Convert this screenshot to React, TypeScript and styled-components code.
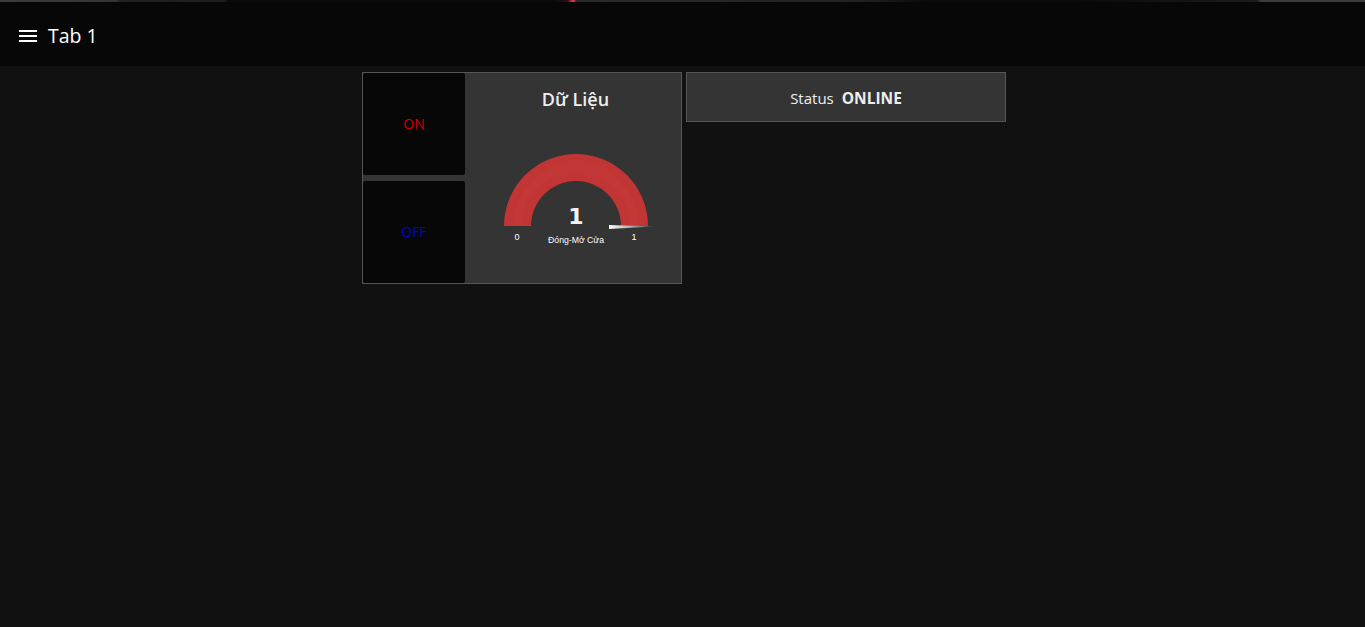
import React from 'react';
import styled, { createGlobalStyle } from 'styled-components';

const GlobalStyle = createGlobalStyle`
  html, body {
    margin: 0;
    padding: 0;
    height: 100%;
    background: #111111;
    overflow: hidden;
  }
  body {
    font-family: "Open Sans", "Noto Sans", "Liberation Sans", sans-serif;
  }
`;

const Page = styled.div`
  width: 1365px;
  height: 627px;
  background: #111111;
`;

const LoadStrip = styled.div`
  height: 2px;
  background: linear-gradient(
    90deg,
    #3c3c3c 0,
    #343434 117px,
    #222222 119px,
    #1c1c1c 225px,
    #0a0a0a 228px,
    #0a0a0a 555px,
    #2a1216 568px,
    #e0304a 572px,
    #e0304a 574px,
    #2a2a2a 576px,
    #222222 860px,
    #0a0a0a 925px,
    #0a0a0a 1080px,
    #1c1c1c 1258px,
    #3c3c3c 1260px,
    #3c3c3c 100%
  );
`;

const Header = styled.header`
  display: flex;
  align-items: center;
  gap: 10px;
  height: 64px;
  padding: 4px 0 0 19px;
  box-sizing: border-box;
  background: #070707;
  color: #ffffff;
`;

const MenuIcon = styled.svg`
  width: 19px;
  height: 14px;
  display: block;
`;

const Title = styled.span`
  font-size: 19.5px;
  line-height: 24px;
`;

const Content = styled.main`
  display: flex;
  align-items: flex-start;
  gap: 4px;
  padding: 6px 0 0 362px;
`;

const Card = styled.section`
  box-sizing: border-box;
  width: 320px;
  background: #343434;
  border: 1px solid #555555;
`;

const ControlCard = styled(Card)`
  display: flex;
  height: 212px;
`;

const Buttons = styled.div`
  display: flex;
  flex-direction: column;
  justify-content: space-between;
  width: 102px;
`;

const Switch = styled.button<{ $color: string }>`
  width: 102px;
  height: 102px;
  padding: 0 0 2px;
  border: none;
  border-radius: 2px;
  background: #070707;
  color: ${({ $color }) => $color};
  font-family: inherit;
  font-size: 14px;
`;

const GaugePanel = styled.div`
  flex: 1;
  min-width: 0;
  display: flex;
  flex-direction: column;
  align-items: center;
  padding-left: 5px;
`;

const GaugeTitle = styled.h2`
  margin: 14px 0 0;
  font-size: 18px;
  line-height: 24px;
  font-weight: 600;
  color: #eeeeee;
`;

const GaugeSvg = styled.svg`
  display: block;
  flex: none;
  margin-top: 35px;
  width: 214px;
  height: 110px;
`;

const StatusCard = styled(Card)`
  display: flex;
  align-items: center;
  justify-content: center;
  gap: 8px;
  height: 50px;
  padding-top: 1px;
  color: #eeeeee;
  font-size: 15px;
`;

const StatusValue = styled.strong`
  font-size: 15.5px;
  font-weight: 700;
`;

const App = () => (
  <Page>
    <GlobalStyle />
    <LoadStrip />
    <Header>
      <MenuIcon viewBox="0 0 19 14">
        <rect x="0" y="1" width="18" height="2" fill="#fff" />
        <rect x="0" y="6" width="18" height="2" fill="#fff" />
        <rect x="0" y="11" width="18" height="2" fill="#fff" />
      </MenuIcon>
      <Title>Tab 1</Title>
    </Header>
    <Content>
      <ControlCard>
        <Buttons>
          <Switch $color="#d40000">ON</Switch>
          <Switch $color="#0000d4">OFF</Switch>
        </Buttons>
        <GaugePanel>
          <GaugeTitle>Dữ Liệu</GaugeTitle>
          <GaugeSvg viewBox="0 0 214 110">
            <defs>
              <linearGradient id="needle" x1="0" x2="1" y1="0" y2="0">
                <stop offset="0" stopColor="#ffffff" />
                <stop offset="1" stopColor="#ffffff" stopOpacity="0.1" />
              </linearGradient>
            </defs>
            <path d="M35 80 A72 72 0 0 1 179 80 L152 80 A45 45 0 0 0 62 80 Z" fill="#c23535" />
            <path d="M44 80 A63 63 0 0 1 170 80 L161 80 A54 54 0 0 0 53 80 Z" fill="#c43737" />
            <path d="M140 79 L186 80.5 L140 83 Z" fill="url(#needle)" />
            <text x="107" y="78" textAnchor="middle" fill="#f4f4f4" fontFamily="'DejaVu Sans', sans-serif" fontSize="22" fontWeight="700">1</text>
            <text x="107" y="97" textAnchor="middle" fill="#ffffff" fontFamily="'Liberation Sans', sans-serif" fontSize="8.7">Đóng-Mở Cửa</text>
            <text x="48" y="94" textAnchor="middle" fill="#ffffff" fontFamily="'Liberation Sans', sans-serif" fontSize="9">0</text>
            <text x="165" y="94" textAnchor="middle" fill="#ffffff" fontFamily="'Liberation Sans', sans-serif" fontSize="9">1</text>
          </GaugeSvg>
        </GaugePanel>
      </ControlCard>
      <StatusCard>
        <span>Status</span>
        <StatusValue>ONLINE</StatusValue>
      </StatusCard>
    </Content>
  </Page>
);

export default App;
